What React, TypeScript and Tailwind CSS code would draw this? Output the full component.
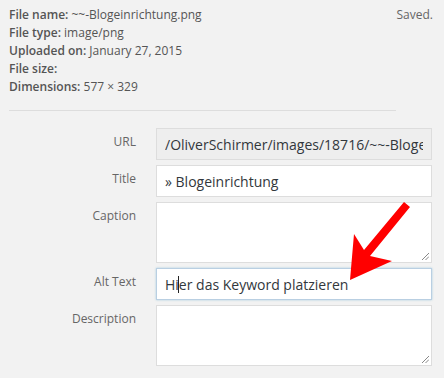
import React from "react";

function Resize() {
  return (
    <svg className="absolute right-[2px] bottom-[2px]" width="8" height="8" viewBox="0 0 8 8">
      <line x1="1" y1="8" x2="8" y2="1" stroke="#888" strokeWidth="1" />
      <line x1="4.5" y1="8" x2="8" y2="4.5" stroke="#888" strokeWidth="1" />
    </svg>
  );
}

export default function App() {
  const meta: [string, string][] = [
    ["File name:", "~~-Blogeinrichtung.png"],
    ["File type:", "image/png"],
    ["Uploaded on:", "January 27, 2015"],
    ["File size:", ""],
    ["Dimensions:", "577 × 329"],
  ];
  return (
    <div
      className="relative w-[444px] h-[378px] bg-[#f2f2f2] overflow-hidden"
      style={{ fontFamily: '"Open Sans", sans-serif' }}
    >
      <div className="flex justify-between pl-[9px] pr-[11px] pt-[6px]">
        <div className="flex flex-col text-[12px] leading-[18px] text-[#555]">
          {meta.map(([k, v]) => (
            <div key={k}>
              <span className="font-semibold">{k}</span> {v}
            </div>
          ))}
        </div>
        <div className="text-[12px] leading-[18px] text-[#666]">Saved.</div>
      </div>
      <div className="ml-[9px] w-[387px] h-px bg-[#dddddd] mt-[14px]" />
      <div className="grid grid-cols-[136px_276px] gap-x-[20px] gap-y-[5px] mt-[17px] text-[12px]">
        <div className="text-right text-[#666] pt-[5px] leading-[18px]">URL</div>
        <div className="h-[32px] border border-[#dddddd] bg-[#eeeeee] pl-[8px] flex items-center overflow-hidden whitespace-nowrap text-[14px] text-[#32373c]">
          <span className="block w-[258px] overflow-hidden">/OliverSchirmer/images/18716/~~-Blogeinrichtung.png</span>
        </div>
        <div className="text-right text-[#666] pt-[5px] leading-[18px]">Title</div>
        <div className="h-[32px] border border-[#dddddd] bg-white px-[8px] flex items-center overflow-hidden whitespace-nowrap text-[14px] text-[#32373c]">
          » Blogeinrichtung
        </div>
        <div className="text-right text-[#666] pt-[5px] leading-[18px]">Caption</div>
        <div className="relative h-[61px] border border-[#dddddd] bg-white">
          <Resize />
        </div>
        <div className="text-right text-[#666] pt-[5px] leading-[18px]">Alt Text</div>
        <div className="h-[32px] border border-[#b9cfe2] bg-white px-[8px] flex items-center overflow-hidden whitespace-nowrap text-[14px] text-[#32373c] shadow-[0_0_2px_rgba(30,140,190,0.35)]">
          Hi
          <span className="inline-block w-px h-[17px] bg-[#222] -mx-[0.5px]" />
          er das Keyword platzieren
        </div>
        <div className="text-right text-[#666] pt-[5px] leading-[18px]">Description</div>
        <div className="relative h-[61px] border border-[#dddddd] bg-white">
          <Resize />
        </div>
      </div>
      <svg className="absolute left-0 top-0" width="444" height="378" viewBox="0 0 444 378">
        <polygon
          points="350,280 354,234 364,250 404,202 410,207 370,256 392,261"
          fill="#ff0000"
        />
      </svg>
    </div>
  );
}
